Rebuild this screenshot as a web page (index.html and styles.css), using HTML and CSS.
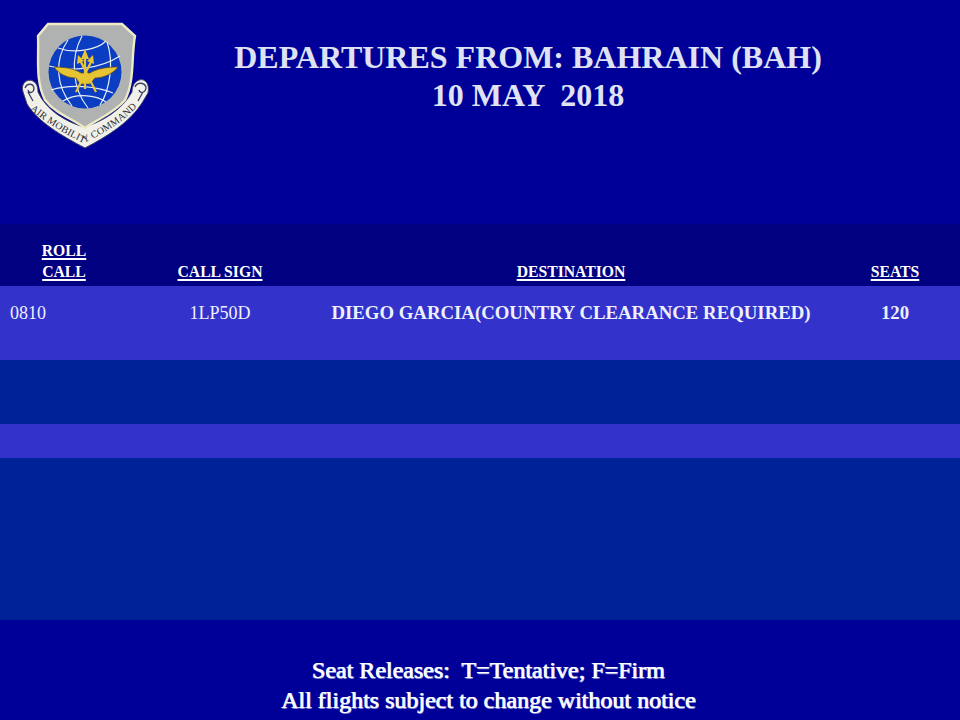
FILE: index.html
```html
<!DOCTYPE html>
<html lang="en">
<head>
<meta charset="utf-8">
<title>Departures from Bahrain</title>
<link rel="stylesheet" href="styles.css">
</head>
<body>
<div class="slide">
  <header class="top">
    <svg class="logo" viewBox="0 0 170 160" width="170" height="160" aria-label="Air Mobility Command shield">
      <!-- scroll -->
      <path d="M23 92C20 83 28 78 33 81C37 83 38 88 38 92C46 110 66 122 84 127C102 122 122 110 132 92C132 87 134 82 139 80C145 78 150 84 148 93L142 103C130 122 108 136 85 148C62 136 38 122 27 104Z" fill="#f1f1ea" stroke="#3a3f6a" stroke-width="1"/>
      <path d="M25 88C27 83 33 83 34 88C34 93 29 94 28 90M135 87C137 82 144 82 146 87C146 93 140 94 139 90M28 92L33 101M143 92L138 101" fill="none" stroke="#3b3f63" stroke-width="1.3"/>
      <!-- shield -->
      <path d="M48 24H122L135 36C131 58 135 80 125 100C113 114 99 118 85 128C71 118 56 114 45 100C35 80 39 58 38 36Z" fill="#b0b2b2" stroke="#ecebc4" stroke-width="2.4"/>
      <!-- globe -->
      <circle cx="85" cy="72" r="36.5" fill="#0a3dc2"/>
      <g fill="none" stroke="#e6ecf8" stroke-width="1.2">
        <path d="M58 48C74 54 97 50 106 41M49 66C70 72 100 69 120 56M51 90C72 83 98 87 113 93M63 101C78 92 98 96 106 102"/>
        <path d="M68 40C54 60 56 86 72 106M82 36C70 58 72 88 88 108M107 42C114 62 110 90 100 105"/>
      </g>
      <!-- wings -->
      <path d="M54 67C66 67 75 69 81 73H90C96 69 106 67 118 67C114 73 104 78 95 78L90 84H80L76 78C66 78 58 73 54 67Z" fill="#e6c433" stroke="#5b4a10" stroke-width=".7"/>
      <!-- arrows -->
      <g fill="none" stroke="#e6c433" stroke-width="2.2">
        <path d="M85 56V89M80 60L96 92M92 60L76 92"/>
      </g>
      <path d="M85 49L81 59H89ZM78 55L77 64L84 61ZM93 55L87 61L94 64Z" fill="#e6c433"/>
      <!-- motto -->
      <path id="motto" d="M27 107C44 121 64 134 84 143C104 134 124 121 140 104" fill="none"/>
      <text class="motto"><textPath href="#motto" startOffset="50%" text-anchor="middle">AIR MOBILITY COMMAND</textPath></text>
    </svg>
    <h1 class="title">DEPARTURES FROM: BAHRAIN (BAH)<br>10 MAY  2018</h1>
  </header>
  <table class="flights">
    <colgroup>
      <col class="c1"><col class="c2"><col class="c3"><col class="c4">
    </colgroup>
    <thead>
      <tr>
        <th><span class="ul">ROLL</span><br><span class="ul">CALL</span></th>
        <th><span class="ul">CALL SIGN</span></th>
        <th><span class="ul">DESTINATION</span></th>
        <th><span class="ul">SEATS</span></th>
      </tr>
    </thead>
    <tbody>
      <tr class="r1 hi">
        <td class="time">0810</td>
        <td class="ctr">1LP50D</td>
        <td class="ctr b">DIEGO GARCIA(COUNTRY CLEARANCE REQUIRED)</td>
        <td class="ctr b">120</td>
      </tr>
      <tr class="r2"><td colspan="4"></td></tr>
      <tr class="r3 hi"><td colspan="4"></td></tr>
      <tr class="r4"><td colspan="4"></td></tr>
    </tbody>
  </table>
  <footer class="foot">Seat Releases:  T=Tentative; F=Firm<br>All flights subject to change without notice</footer>
</div>
</body>
</html>
```
FILE: styles.css
```css
html, body { margin: 0; padding: 0; }
body { background: #000099; font-family: "Liberation Serif", "Times New Roman", serif; color: #fff; }
.slide { width: 960px; height: 720px; display: flex; flex-direction: column; overflow: hidden; background: #000099; }
.top { height: 224px; position: relative; box-sizing: border-box; padding: 38px 0 0 96px; flex: none; }
.logo { position: absolute; left: 0; top: 0; }
.motto { font-family: "Liberation Serif", serif; font-size: 10px; fill: #2b2b30; letter-spacing: .2px; }
.title { margin: 0; font-size: 32px; line-height: 38px; font-weight: 700; text-align: center; white-space: pre-wrap; color: #dfe2f2; }
.flights { width: 960px; border-collapse: collapse; table-layout: fixed; flex: none; }
.c1 { width: 128px; } .c2 { width: 184px; } .c3 { width: 518px; } .c4 { width: 130px; }
.flights th { height: 62px; box-sizing: border-box; background: #000080; padding: 0 0 4px; font-size: 15.7px; line-height: 21px; font-weight: 700; text-align: center; vertical-align: bottom; }
.ul { text-decoration: underline; text-decoration-thickness: 2px; text-underline-offset: 2px; }
.flights td { padding: 17px 0 0; font-size: 18px; line-height: 20px; vertical-align: top; color: #eef0fb; }
.flights .time { padding-left: 10px; }
.flights .b { font-size: 18.8px; font-weight: 700; }
.ctr { text-align: center; }
.hi td { background: #3333cc; }
.flights .r2 td, .flights .r4 td { background: #002299; padding: 0; }
.flights .r3 td { padding: 0; }
.r1 td { height: 74px; box-sizing: border-box; }
.flights .r2 td { height: 64px; }
.flights .r3 td { height: 34px; }
.flights .r4 td { height: 162px; }
.foot { flex: 1; box-sizing: border-box; padding: 35px 0 0 16px; text-align: center; font-size: 24px; line-height: 30px; white-space: pre-wrap; color: #fff; text-shadow: 1px 0 0 #e4e6fb, 1px 1px 0 #7d84d4; }
```
